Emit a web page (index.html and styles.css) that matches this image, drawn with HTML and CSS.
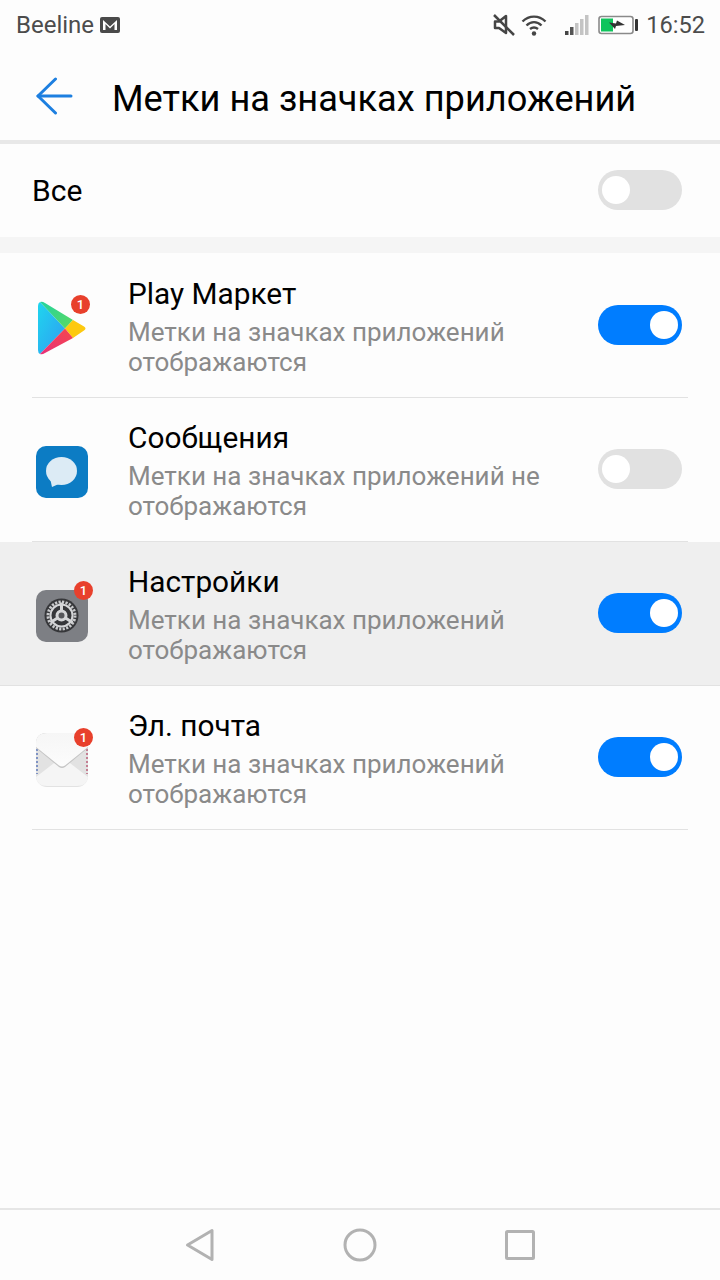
FILE: index.html
```html
<!DOCTYPE html>
<html lang="ru">
<head>
    <meta charset="UTF-8">
    <meta name="viewport" content="width=device-width, initial-scale=1.0">
    <title>Метки на значках приложений</title>
    <link rel="stylesheet" href="styles.css">
</head>
<body>
    <div class="screen">
        <div class="status-bar">
            <div class="status-left">
                <span>Beeline</span>
                <svg class="mail-icon" width="20" height="16" viewBox="0 0 20 16"><rect x="0" y="0" width="20" height="16" rx="2" fill="#4a4a4a"/><path d="M3 3 L10 9.500 L17 3 V13 H14.500 V7 L10 11.500 L5.500 7 V13 H3 Z" fill="#fff"/></svg>
            </div>
            <div class="status-right">
                <svg width="22" height="22" viewBox="0 0 22 22" fill="none"><path d="M2 7.500 H6 L13 2 V19 L6 14 H2 Z" fill="#fff" stroke="#454545" stroke-width="2.500" stroke-linejoin="round"/><path d="M1 1 L21 21" stroke="#454545" stroke-width="2.500"/></svg>
                <svg class="wifi" width="26" height="22" viewBox="0 0 26 22" fill="none" stroke="#454545" stroke-width="2.400"><path d="M1.500 7.500 C8 1 18 1 24.500 7.500"/><path d="M5.500 11.500 C10 7 16 7 20.500 11.500"/><path d="M9 15 C11.500 13 14.500 13 17 15"/><circle cx="13" cy="19.500" r="2.200" fill="#454545" stroke="none"/></svg>
                <svg class="signal" width="24" height="22" viewBox="0 0 24 22"><rect x="0" y="17" width="3.500" height="4" fill="#454545"/><rect x="5" y="13" width="3.500" height="8" fill="#555"/><rect x="10" y="9" width="3.500" height="12" fill="#c4c4c4"/><rect x="15" y="5" width="3.500" height="16" fill="#c4c4c4"/><rect x="20" y="1" width="3.500" height="20" fill="#c4c4c4"/></svg>
                <svg class="battery" width="40" height="20" viewBox="0 0 40 20"><rect x="1" y="1.500" width="34" height="17" rx="2.500" fill="#fff" stroke="#8a8a8a" stroke-width="1.600"/><rect x="3" y="3.500" width="12" height="13" fill="#0fc45c"/><path d="M11 7.500 L18 8.500 L19 5.500 L27 10 L18 11 L17 14 Z" fill="#333"/><rect x="37" y="4" width="3" height="12" rx="1" fill="#333"/></svg>
                <span class="clock">16:52</span>
            </div>
        </div>

        <div class="toolbar">
            <svg class="back" width="37" height="38" viewBox="0 0 37 38" fill="none" stroke="#1d7fe0" stroke-width="3" stroke-linecap="round" stroke-linejoin="round"><path d="M2 19 H35"/><path d="M19.500 2 L2 19 L19.500 36"/></svg>
            <h1>Метки на значках приложений</h1>
        </div>

        <div class="all-row">
            <span>Все</span>
            <div class="switch"></div>
        </div>

        <div class="band"></div>

        <div class="list">
            <div class="row">
                <div class="app-icon">
                    <svg width="48" height="54" viewBox="0 0 48 54">
                        <defs>
                            <linearGradient id="play-blue" x1="0" y1="0" x2="1" y2="1"><stop offset="0" stop-color="#1fd6ee"/><stop offset="1" stop-color="#2f9cf2"/></linearGradient>
                            <linearGradient id="play-green" x1="0" y1="0" x2="1" y2="0.600"><stop offset="0" stop-color="#22d3a0"/><stop offset="1" stop-color="#52d86a"/></linearGradient>
                            <linearGradient id="play-red" x1="1" y1="0" x2="0" y2="1"><stop offset="0" stop-color="#f5474c"/><stop offset="1" stop-color="#e8307a"/></linearGradient>
                        </defs>
                        <path d="M2 1 L27 27.500 L2 53 Q0 52 0 49 V5 Q0 2 2 1 Z" fill="url(#play-blue)"/>
                        <path d="M2 1 Q4 0 7 2 L35 19 L27 27.500 Z" fill="url(#play-green)"/>
                        <path d="M35 19 L46 25.500 Q49 27.500 46 29.500 L35 37 L27 27.500 Z" fill="#fdc90f"/>
                        <path d="M2 53 L27 27.500 L35 37 L7 52 Q4 54 2 53 Z" fill="url(#play-red)"/>
                    </svg>
                    <span class="badge badge-play">1</span>
                </div>
                <div class="row-text">
                    <div class="row-title">Play Маркет</div>
                    <div class="row-sub">Метки на значках приложений отображаются</div>
                </div>
                <div class="switch on"></div>
            </div>
            <div class="row">
                <div class="app-icon">
                    <svg width="52" height="52" viewBox="0 0 52 52">
                        <rect width="52" height="52" rx="10" fill="#0c7cc4"/>
                        <ellipse cx="25.500" cy="25" rx="15.500" ry="14" fill="#dcebf5"/>
                        <path d="M14 32 L16 41 L25 37 Z" fill="#dcebf5"/>
                    </svg>
                </div>
                <div class="row-text">
                    <div class="row-title">Сообщения</div>
                    <div class="row-sub">Метки на значках приложений не отображаются</div>
                </div>
                <div class="switch"></div>
            </div>
            <div class="row selected">
                <div class="app-icon">
                    <svg width="52" height="52" viewBox="0 0 52 52">
                        <rect width="52" height="52" rx="10" fill="#7d7f84"/>
                        <circle cx="25.500" cy="25.500" r="17" fill="#36373a"/>
                        <circle cx="25.500" cy="25.500" r="13.500" fill="none" stroke="#c9cacc" stroke-width="3" stroke-dasharray="2.200 1.340"/>
                        <circle cx="25.500" cy="25.500" r="11" fill="none" stroke="#d4d5d7" stroke-width="2"/>
                        <path d="M25.500 12.500 V20.500 M14.500 32.500 L21.500 28 M36.500 32.500 L29.500 28" stroke="#d4d5d7" stroke-width="3"/>
                        <circle cx="25.500" cy="25.500" r="4.500" fill="#55565a" stroke="#d4d5d7" stroke-width="3"/>
                    </svg>
                    <span class="badge">1</span>
                </div>
                <div class="row-text">
                    <div class="row-title">Настройки</div>
                    <div class="row-sub">Метки на значках приложений отображаются</div>
                </div>
                <div class="switch on"></div>
            </div>
            <div class="row">
                <div class="app-icon">
                    <svg width="52" height="54" viewBox="0 0 52 54">
                        <defs>
                            <linearGradient id="mail-flap" x1="0" y1="0" x2="0" y2="1"><stop offset="0" stop-color="#f6f6f6"/><stop offset="1" stop-color="#fcfcfc"/></linearGradient>
                        </defs>
                        <rect width="52" height="54" rx="11" fill="#e2e2e2"/>
                        <path d="M0 44 L22 27 Q26 24 30 27 L52 44 Q51 53 41 53 H11 Q1 53 0 44 Z" fill="#f5f5f5"/>
                        <path d="M1 16 V41" stroke="#7f93c4" stroke-width="2" stroke-dasharray="2 2"/>
                        <path d="M51 16 V41" stroke="#c47f93" stroke-width="2" stroke-dasharray="2 2"/>
                        <path d="M0 11 Q0 0 11 0 H41 Q52 0 52 11 V15 L29 34 Q26 36 23 34 L0 15 Z" fill="#c4c4c4"/>
                        <path d="M0 10 Q0 0 11 0 H41 Q52 0 52 10 V14 L29 32.500 Q26 34.500 23 32.500 L0 14 Z" fill="url(#mail-flap)"/>
                    </svg>
                    <span class="badge badge-mail">1</span>
                </div>
                <div class="row-text">
                    <div class="row-title">Эл. почта</div>
                    <div class="row-sub">Метки на значках приложений отображаются</div>
                </div>
                <div class="switch on"></div>
            </div>
        </div>

        <div class="nav-bar">
            <svg width="32" height="34" viewBox="0 0 32 34" fill="none" stroke="#b2b2b2" stroke-width="3" stroke-linejoin="round"><path d="M29 2.500 V31.500 L4.500 17 Z"/></svg>
            <svg width="34" height="34" viewBox="0 0 34 34" fill="none" stroke="#b2b2b2" stroke-width="3"><circle cx="17" cy="17" r="15"/></svg>
            <svg width="30" height="30" viewBox="0 0 30 30" fill="none" stroke="#b2b2b2" stroke-width="3" stroke-linejoin="round"><rect x="1.500" y="1.500" width="27" height="27" rx="1"/></svg>
        </div>
    </div>
</body>
</html>
```

FILE: styles.css
```css
body {
    margin: 0;
    background-color: #fdfdfd;
    font-family: Roboto, "Noto Sans", sans-serif;
}

.screen {
    display: flex;
    flex-direction: column;
    width: 720px;
    height: 1280px;
    overflow: hidden;
}

.status-bar {
    display: flex;
    justify-content: space-between;
    align-items: center;
    height: 50px;
    padding: 0 15px 0 16px;
    color: #4c4c4c;
    font-size: 24px;
}

.status-left,
.status-right {
    display: flex;
    align-items: center;
}

.mail-icon {
    margin-left: 6px;
}

.wifi {
    margin-left: 6px;
}

.signal {
    margin-left: 18px;
}

.battery {
    margin-left: 9px;
}

.clock {
    margin-left: 8px;
    font-size: 23.6px;
}

.toolbar {
    display: flex;
    align-items: center;
    height: 90px;
    padding-left: 36px;
    border-bottom: 4px solid #e8e8e8;
}

.back {
    margin-top: 2px;
}

h1 {
    margin: 0 0 0 39px;
    padding-top: 6px;
    color: #000;
    font-size: 36.2px;
    font-weight: 400;
}

.all-row {
    display: flex;
    justify-content: space-between;
    align-items: center;
    height: 93px;
    padding: 0 38px 0 32px;
    font-size: 30px;
    color: #000;
}

.band {
    height: 16px;
    background-color: #f5f5f5;
}

.list {
    padding-top: 1px;
}

.row {
    display: flex;
    align-items: center;
    height: 144px;
    padding: 0 38px 0 32px;
    position: relative;
}

.row::after {
    content: "";
    position: absolute;
    left: 32px;
    right: 32px;
    bottom: 0;
    height: 1px;
    background-color: #e2e2e2;
}

.selected {
    background-color: #efefef;
}

.selected::after {
    left: 0;
    right: 0;
}

.app-icon {
    position: relative;
    display: flex;
    justify-content: center;
    width: 60px;
    margin: 3px 36px 0 0;
}

.badge {
    position: absolute;
    top: -9px;
    right: -1px;
    width: 19px;
    height: 19px;
    border-radius: 50%;
    background-color: #e8402c;
    color: #fff;
    font-size: 13px;
    font-weight: 500;
    line-height: 19px;
    text-align: center;
}

.badge-play {
    top: -6px;
    right: 2px;
}

.badge-mail {
    top: -5px;
}

.row-text {
    flex: 1;
    width: 0;
    padding: 1px 40px 0 0;
}

.row-title {
    color: #000;
    font-size: 29.8px;
    line-height: 36px;
    margin-bottom: 5px;
}

.row-sub {
    color: #8a8a8a;
    font-size: 26px;
    line-height: 30px;
}

.switch {
    position: relative;
    flex: none;
    width: 84px;
    height: 40px;
    margin-bottom: 2px;
    border-radius: 20px;
    background-color: #e1e1e1;
}

.switch::after {
    content: "";
    position: absolute;
    top: 6px;
    left: 4px;
    width: 28px;
    height: 28px;
    border-radius: 50%;
    background-color: #fff;
}

.switch.on {
    background-color: #007dff;
}

.switch.on::after {
    left: 52px;
}

.nav-bar {
    display: flex;
    justify-content: center;
    align-items: center;
    gap: 128px;
    height: 70px;
    margin-top: auto;
    padding-right: 2px;
    border-top: 2px solid #e6e6e6;
}
```
